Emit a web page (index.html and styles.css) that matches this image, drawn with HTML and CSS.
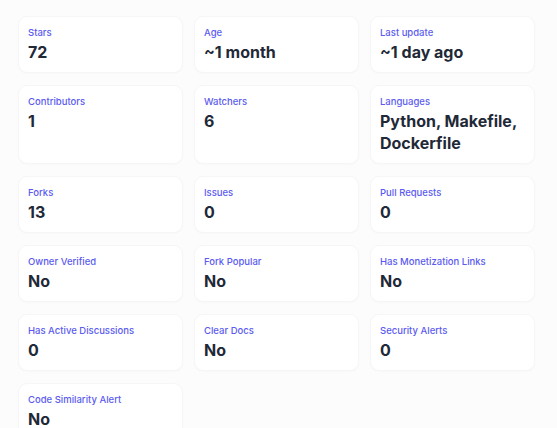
FILE: index.html
```html
<!DOCTYPE html>
<html lang="en">
<head>
<meta charset="utf-8">
<title>Repository stats</title>
<link rel="stylesheet" href="styles.css">
</head>
<body>
<main class="stats">
  <div class="card"><div class="label">Stars</div><div class="value">72</div></div>
  <div class="card"><div class="label">Age</div><div class="value">~1 month</div></div>
  <div class="card"><div class="label">Last update</div><div class="value">~1 day ago</div></div>
  <div class="card"><div class="label">Contributors</div><div class="value">1</div></div>
  <div class="card"><div class="label">Watchers</div><div class="value">6</div></div>
  <div class="card"><div class="label">Languages</div><div class="value">Python, Makefile, Dockerfile</div></div>
  <div class="card"><div class="label">Forks</div><div class="value">13</div></div>
  <div class="card"><div class="label">Issues</div><div class="value">0</div></div>
  <div class="card"><div class="label">Pull Requests</div><div class="value">0</div></div>
  <div class="card"><div class="label">Owner Verified</div><div class="value">No</div></div>
  <div class="card"><div class="label">Fork Popular</div><div class="value">No</div></div>
  <div class="card"><div class="label">Has Monetization Links</div><div class="value">No</div></div>
  <div class="card"><div class="label">Has Active Discussions</div><div class="value">0</div></div>
  <div class="card"><div class="label">Clear Docs</div><div class="value">No</div></div>
  <div class="card"><div class="label">Security Alerts</div><div class="value">0</div></div>
  <div class="card"><div class="label">Code Similarity Alert</div><div class="value">No</div></div>
</main>
</body>
</html>
```
FILE: styles.css
```css
html, body {
  margin: 0;
  padding: 0;
  background: #fcfcfc;
  font-family: Inter, "Noto Sans", sans-serif;
}
.stats {
  display: grid;
  grid-template-columns: repeat(3, 165px);
  column-gap: 11px;
  row-gap: 12px;
  padding: 16px 0 0 18px;
}
.card {
  background: #ffffff;
  border: 1px solid #f6f6f8;
  border-radius: 9px;
  box-shadow: 0 1px 2px rgba(0, 0, 0, 0.02);
  padding: 8px 9px 9px 9px;
}
.label {
  font-size: 9.5px;
  line-height: 15px;
  font-weight: 500;
  color: #5b5bf0;
  margin-bottom: 1px;
}
.value {
  font-size: 16px;
  line-height: 22px;
  font-weight: 700;
  color: #1f2937;
}
```
